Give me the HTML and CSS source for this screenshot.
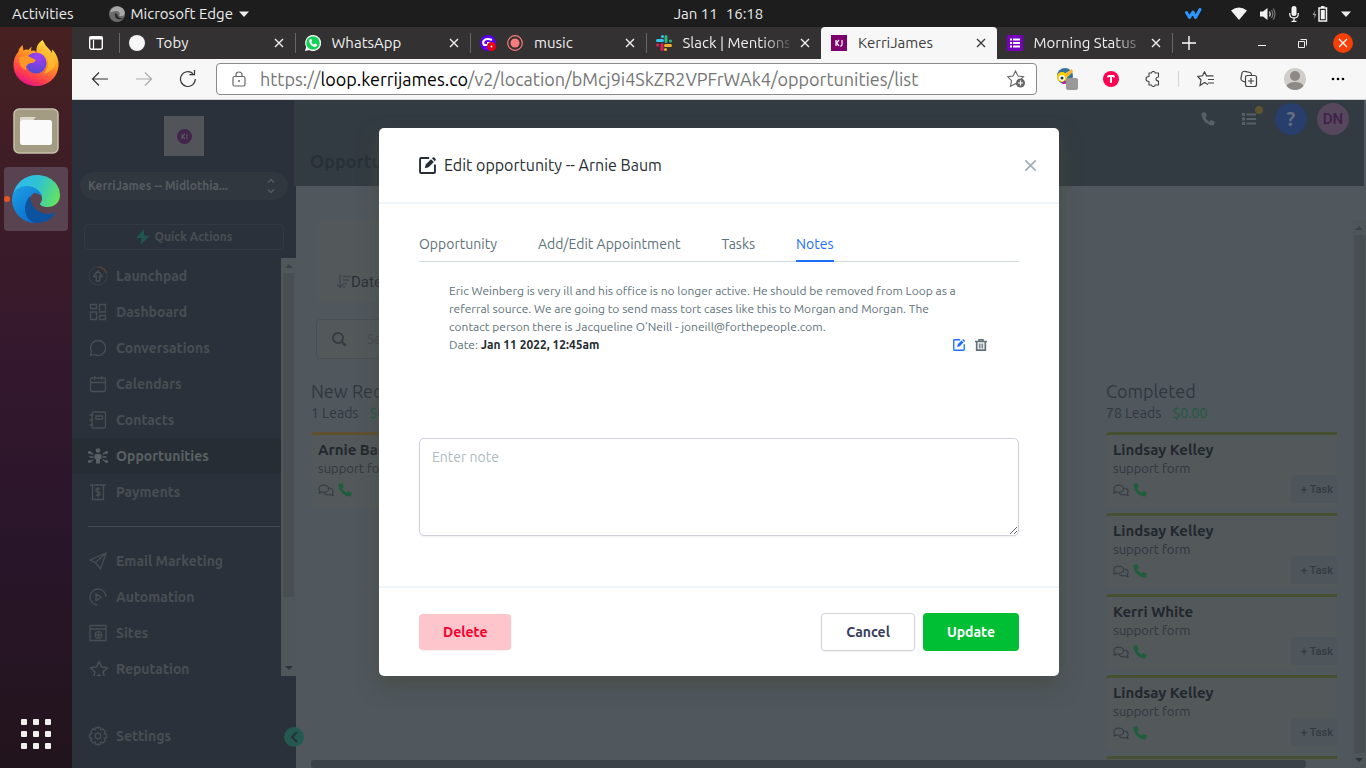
FILE: index.html
```html
<!DOCTYPE html>
<html lang="en">
<head>
<meta charset="utf-8">
<title>KerriJames</title>
<link rel="stylesheet" href="styles.css">
</head>
<body>
<svg class="sprite" aria-hidden="true">
  <symbol id="x" viewBox="0 0 10 10"><path d="M1 1l8 8M9 1l-8 8" fill="none" stroke="currentColor" stroke-width="1.4"/></symbol>
  <symbol id="phone" viewBox="0 0 16 16"><path d="M1.300.8 4.300.2Q5 .1 5.300.8L6.500 3.900Q6.700 4.500 6.200 5L4.800 6.200Q6.300 9.100 9.700 11L11 9.500Q11.500 9 12.100 9.300L15.200 10.700Q15.800 11 15.600 11.700L14.900 14.700Q14.700 15.400 14 15.400C6.500 15.400.6 9.200.6 1.800Q.6 1 1.300.8z" fill="currentColor"/></symbol>
  <symbol id="chats" viewBox="0 0 18 14"><g fill="none" stroke="currentColor" stroke-width="1.300" stroke-linejoin="round"><path d="M6.500 1C9.600 1 12 2.800 12 5s-2.400 4-5.500 4c-.9 0-1.700-.1-2.400-.4C3.200 9.300 2 9.800.8 9.800 1.500 9 2 8.100 2 7.500 1.300 6.800 1 6 1 5c0-2.200 2.400-4 5.500-4z"/><path d="M12.800 4.300c2.400.4 4.200 1.900 4.200 3.700 0 .9-.4 1.700-1 2.400.1.700.6 1.500 1.200 2.300-1.300-.1-2.500-.5-3.400-1.200-3 .8-5.800 0-7.100-1.800"/></g></symbol>
  <symbol id="edit" viewBox="0 0 16 16"><path d="M9.500 1H2Q1 1 1 2v12q0 1 1 1h12q1 0 1-1V7" fill="none" stroke="currentColor" stroke-width="1.800"/><path d="M5.500 10.500 6.300 7l5-5 2.700 2.700-5 5zM12.200 1.200l1-1q2.700.3 2.600 2.700l-1 1z" fill="currentColor"/></symbol>
  <symbol id="star" viewBox="0 0 18 18"><path d="M9 1.300 11.300 6.300 16.800 7 12.700 10.700 13.900 16.300 9 13.500 4.100 16.300 5.300 10.700 1.200 7 6.700 6.300z" fill="none" stroke="currentColor" stroke-width="1.400" stroke-linejoin="round"/></symbol>
  <symbol id="magnify" viewBox="0 0 16 16"><circle cx="7" cy="7" r="5" fill="none" stroke="currentColor" stroke-width="1.900"/><path d="m10.600 10.600 4.200 4.200" stroke="currentColor" stroke-width="2.200"/></symbol>
</svg>

<header class="topbar">
  <div class="topbar-left">
    <button>Activities</button>
    <button class="app-menu">
      <svg width="16" height="16" viewBox="0 0 16 16"><circle cx="8" cy="8" r="8" fill="#6c6c6c"/><path d="M1 7C2 2 6 0 10 .7c5 1 7 6 5 8.300-1 1.500-4 1.500-5 .5 2-2 0-4.500-2.500-4.500C4 5 1.500 6 1 7z" fill="#a8a8a8"/><path d="M6 7c-1 3 1 6.500 4.500 6.500 2 0 3.500-.8 4-1.500-3 1-6-.5-6-3.500z" fill="#2b2b2b"/></svg>
      Microsoft Edge
      <svg width="10" height="6" viewBox="0 0 10 6"><path d="M0 .5h10L5 6z" fill="#eee"/></svg>
    </button>
  </div>
  <time class="clock"><span>Jan 11</span><span>16:18</span></time>
  <div class="tray">
    <svg class="tray-w" width="17" height="12" viewBox="0 0 17 12"><path d="M1.500 4.500 4.500 9.500 8 4l2.500 5.500L15 1.500" fill="none" stroke="#2e95ff" stroke-width="3" stroke-linecap="round" stroke-linejoin="round"/></svg>
    <svg width="16" height="13" viewBox="0 0 16 13"><path d="M0 3.500Q8-2.500 16 3.500L8 13z" fill="#f2f2f2"/></svg>
    <svg width="16" height="14" viewBox="0 0 16 14"><path d="M0 4.500h3L7.500 1v12L3 9.500H0z" fill="#f2f2f2"/><path d="M9.500 4.500q1.500 2.500 0 5" fill="none" stroke="#ddd" stroke-width="1.300"/><path d="M11.500 3q2.500 4 0 8M13.300 1.500q3.200 5.500 0 11" fill="none" stroke="#777" stroke-width="1.200"/></svg>
    <svg width="10" height="16" viewBox="0 0 10 16"><rect x="2.500" y="0" width="5" height="10" rx="2.500" fill="#f2f2f2"/><path d="M.8 7v1.500Q1 12 5 12t4.200-3.500V7M5 12v3M2.500 15.300h5" fill="none" stroke="#f2f2f2" stroke-width="1.300"/></svg>
    <svg width="16" height="16" viewBox="0 0 16 16"><path d="M3.500 4 .5 9h2L2 13l2.500-5h-2z" fill="#999"/><path d="M7 2h7.500v13H7zM9 .8h3.500" fill="none" stroke="#f2f2f2" stroke-width="1.500"/><path d="M8.800 4h4v9.200h-4z" fill="#f2f2f2"/></svg>
    <svg width="10" height="6" viewBox="0 0 10 6"><path d="M0 .5h10L5 6z" fill="#eee"/></svg>
  </div>
</header>

<div class="desktop">
  <nav class="dock" aria-label="Dock">
    <button class="dock-app" aria-label="Firefox">
      <svg width="48" height="48" viewBox="0 0 48 48"><defs><linearGradient id="ff" x1=".8" y1="0" x2=".3" y2="1"><stop offset="0" stop-color="#fff04a"/><stop offset=".45" stop-color="#ff9021"/><stop offset=".8" stop-color="#ff3b50"/><stop offset="1" stop-color="#e0108a"/></linearGradient><radialGradient id="fp" cx=".6" cy=".2" r=".9"><stop offset="0" stop-color="#a73df0"/><stop offset="1" stop-color="#4b4bd0"/></radialGradient></defs><path d="M30.500 1c2 3 2.500 5 5.500 8 1.500 1.500 3 3 3.800 5l.4-3.500c4 4 7 10 6.300 16.500C45.500 39 36 47 24 47S1.500 38 1.500 26c0-6 2-10 5-13.500L7 10l3.500-4 1 5.500c1.500-1 3-1.300 5-.5l3-3.500-.5 4.500c2-1 4-.5 5.500 1C24 8 26 4 30.500 1z" fill="url(#ff)"/><circle cx="24" cy="24" r="10.500" fill="url(#fp)"/><path d="M7 19q6-4 11-1l6 3q-1 3-7 3.500-4 2-3 7Q7 28 7 19z" fill="#ff9628"/><path d="M26 14q8 0 10 8 1 8-5 13 10-2 13-11-3-9-9-12-4-1-9 2z" fill="#ffc12f" opacity=".7"/></svg>
    </button>
    <button class="dock-app" aria-label="Files">
      <svg width="46" height="46" viewBox="0 0 46 46"><rect x="1" y="1" width="44" height="44" rx="5" fill="#a39b82" stroke="#c6c0aa" stroke-width="1.500"/><path d="M7 11q0-2 2-2h9l4 4v5H7z" fill="#ddd9cc"/><rect x="7" y="12" width="32" height="25" rx="2.500" fill="#fafafa"/><path d="M7 13q0-1 2-1h11l3-3H9q-2 0-2 2z" fill="#ddd9cc"/></svg>
    </button>
    <button class="dock-app running" aria-label="Microsoft Edge">
      <svg width="48" height="48" viewBox="0 0 48 48"><defs><linearGradient id="eg" x1="0" y1=".3" x2="1" y2=".6"><stop offset="0" stop-color="#2fb9f0"/><stop offset=".5" stop-color="#2fc4d0"/><stop offset="1" stop-color="#62e35d"/></linearGradient><linearGradient id="eb" x1="0" y1="0" x2=".6" y2="1"><stop offset="0" stop-color="#1da0e2"/><stop offset="1" stop-color="#0a6fd0"/></linearGradient></defs><path d="M1 20C3 8 13 0 25 0c13 0 23 9 23 20 0 8-6 12-12 12-5 0-8-1.500-8-3 0-1 2-2 2-5.500C30 18 25 13 17 12 8 12 3 16 1 20z" fill="url(#eg)"/><path d="M0 24C0 15 8 11 15 11c8 0 14 5 15 11-2-3-5-4-8-4-7 4-11 23 2 30C9 48 0 36 0 24z" fill="url(#eb)"/><path d="M18 21c0 10 8 18 19 18 3 0 5-1 7-2-4 7-11 11-19 11-7 0-12-7-12-14 0-6 3-11 5-13z" fill="#0c529f"/></svg>
    </button>
    <button class="show-apps" aria-label="Show applications"><i></i><i></i><i></i><i></i><i></i><i></i><i></i><i></i><i></i></button>
  </nav>

  <div class="browser">
    <div class="tabstrip">
      <button class="tab-menu" aria-label="Tab actions"><svg width="14" height="14" viewBox="0 0 14 14"><rect x=".7" y=".7" width="12.600" height="12.600" rx="2" fill="none" stroke="#fff" stroke-width="1.400"/><path d="M1 1h12v2H1zM4.500 4v9" fill="#fff" stroke="#fff" stroke-width="1.200"/></svg></button>
      <div class="tabs">
        <div class="tab"><svg width="16" height="16"><circle cx="8" cy="8" r="8" fill="#f7f7f7"/></svg><span>Toby</span><button aria-label="Close tab"><svg width="10" height="10"><use href="#x"/></svg></button></div>
        <div class="tab"><svg width="16" height="16" viewBox="0 0 16 16"><path d="M8 0a8 8 0 1 1-3.800 15L0 16l1.200-4A8 8 0 0 1 8 0z" fill="#fff"/><circle cx="8" cy="8" r="6.800" fill="#12d156"/><path d="M5 4h1.300l.8 2-.8 1q1 2 2.800 2.600l1-1 2 1v1.200q-1 1.600-3 1Q5 10.500 4.200 6.500 4 5 5 4z" fill="#fff"/></svg><span>WhatsApp</span><button aria-label="Close tab"><svg width="10" height="10"><use href="#x"/></svg></button></div>
        <div class="tab"><svg width="16" height="16" viewBox="0 0 16 16"><circle cx="8" cy="8" r="8" fill="#5a00f0"/><path d="M12 5q-5-2-7.500 0T4 10h4M7 8h5" fill="none" stroke="#fff" stroke-width="2"/><circle cx="11.500" cy="11.500" r="4.500" fill="#e90016"/><circle cx="11.500" cy="11.500" r="1" fill="#fff"/></svg><svg width="16" height="16"><circle cx="8" cy="8" r="7.300" fill="none" stroke="#f97c7c" stroke-width="1.200"/><circle cx="8" cy="8" r="4.500" fill="#f97c7c"/></svg><span>music</span><button aria-label="Close tab"><svg width="10" height="10"><use href="#x"/></svg></button></div>
        <div class="tab fade"><svg width="16" height="16" viewBox="0 0 16 16" fill="none" stroke-width="3" stroke-linecap="round"><path d="M6.500 1.500v.1M6.500 5.500H1.500" stroke="#36c5f0"/><path d="M10 1.500v5M14.500 6h-.1" stroke="#2eb67d"/><path d="M6 14.500v-5M1.500 10h.1" stroke="#e01e5a"/><path d="M9.500 14.500v-.1M9.500 10.500h5" stroke="#ecb22e"/></svg><span>Slack | Mentions</span><button aria-label="Close tab"><svg width="10" height="10"><use href="#x"/></svg></button></div>
        <div class="tab active"><svg width="16" height="16" viewBox="0 0 16 16"><path d="M0 0h16v16H0z" fill="#7d006d"/><path d="M5 5v6M8 5 5.500 8 8 11M11 5v5q-.3 1.200-1.800 1" fill="none" stroke="#fff" stroke-width="1.200"/></svg><span>KerriJames</span><button aria-label="Close tab"><svg width="10" height="10"><use href="#x"/></svg></button></div>
        <div class="tab fade"><svg width="16" height="16" viewBox="0 0 16 16"><rect width="16" height="16" rx="1" fill="#7600bd"/><path d="M3 4.500h2M3 8h2M3 11.500h2M6 4.500h7M6 8h7M6 11.500h7" stroke="#fff" stroke-width="1.800"/></svg><span>Morning Status</span><button aria-label="Close tab"><svg width="10" height="10"><use href="#x"/></svg></button></div>
      </div>
      <button class="new-tab" aria-label="New tab"><svg width="14" height="14"><path d="M7 0v14M0 7h14" stroke="#fff" stroke-width="1.400"/></svg></button>
      <div class="window-buttons">
        <button aria-label="Minimize"><svg width="8" height="8"><path d="M0 6.500h8" stroke="#fff"/></svg></button>
        <button aria-label="Restore"><svg width="9" height="9"><path d="M.5 2.500h6v6h-6zM2.500 .5h6v6" fill="none" stroke="#eee"/></svg></button>
        <button class="quit" aria-label="Close window"><svg width="10" height="10"><use href="#x"/></svg></button>
      </div>
    </div>

    <div class="toolbar">
      <div class="nav-buttons">
        <button aria-label="Back"><svg width="18" height="16" viewBox="0 0 18 16"><path d="M17 8H1.500M8 1.500 1.500 8 8 14.500" fill="none" stroke="#333" stroke-width="1.200"/></svg></button>
        <button aria-label="Forward"><svg width="18" height="16" viewBox="0 0 18 16"><path d="M1 8h15.500M10 1.500 16.500 8 10 14.500" fill="none" stroke="#aaa" stroke-width="1.200"/></svg></button>
        <button aria-label="Reload"><svg width="18" height="18" viewBox="0 0 18 18"><path d="M16.300 9A7.400 7.400 0 1 1 14 3.700M15.500 0v4.700h-5" fill="none" stroke="#333" stroke-width="1.200"/></svg></button>
      </div>
      <div class="address">
        <svg width="14" height="16" viewBox="0 0 14 16"><path d="M2.500 5.500h9q1.500 0 1.500 1.500v6.500q0 1.500-1.500 1.500h-9Q1 15 1 13.500V7q0-1.500 1.500-1.500zM4 5.500V4q0-3 3-3t3 3v1.500" fill="none" stroke="#666" stroke-width="1.200"/><circle cx="7" cy="10" r="1" fill="#666"/></svg>
        <div class="url" role="textbox" aria-label="Address" contenteditable="true" spellcheck="false">https://<b>loop.kerrijames.co</b>/v2/location/bMcj9i4SkZR2VPFrWAk4/opportunities/list</div>
        <svg width="20" height="18" viewBox="0 0 20 18"><path d="M8.500 1 11 6l5.500.7-4 4-.5 5-3.500-2-5 2.600 1-5.600L.8 6.800 6 6z" fill="none" stroke="#666" stroke-width="1.100"/><circle cx="13.500" cy="13" r="4.500" fill="#666"/><path d="M11 13h5M13.500 10.500v5" stroke="#fff" stroke-width="1.200"/></svg>
      </div>
      <div class="extensions">
        <button aria-label="Extension"><svg width="22" height="22" viewBox="0 0 22 22"><circle cx="9" cy="8" r="8" fill="#35759b"/><path d="M3 9 16 1l1 3L6 14z" fill="#f6b638"/><circle cx="6" cy="9" r="5" fill="#ffd000"/><circle cx="6" cy="10" r="3" fill="#fff"/><circle cx="6" cy="10" r="1.500" fill="#234"/><path d="M6 16 9 12v4z" fill="#f0a"/><rect x="10" y="10" width="12" height="12" rx="2" fill="#999"/></svg></button>
        <button aria-label="Toby"><svg width="16" height="16" viewBox="0 0 16 16"><circle cx="8" cy="8" r="8" fill="#ff0053"/><path d="M4 6q0-2 2-2h4q2 0 2 2-1 1-2 0L9 6v5.500q-1 1-2 0V6L6 6Q5 7 4 6z" fill="#fff"/></svg></button>
        <button aria-label="Extensions"><svg width="16" height="16" viewBox="0 0 16 16"><path d="M4 2h2.500q0-1.500 1.800-1.500T10 2h3.500v4q-2.500 0-2.500 2t2.500 2v4H10q0 1.500-1.700 1.500T6.500 14H4v-3.500Q1 10.500 1 8t3-2.500z" fill="none" stroke="#444" stroke-width="1.100" stroke-linejoin="round"/></svg></button>
        <hr>
        <button aria-label="Favorites"><svg width="18" height="16" viewBox="0 0 18 16"><path d="M11 13.500 7.500 11.500 3 14.500l1-5.500L.8 5.500l4.700-.7L7.500.8l2 4h7M11 8.500h6M11 12h6" fill="none" stroke="#444" stroke-width="1.200"/></svg></button>
        <button aria-label="Collections"><svg width="18" height="18" viewBox="0 0 18 18"><path d="M7 5.500h7.500q2 0 2 2v7q0 2-2 2h-7q-2 0-2-2V7.500q0-2 2-2zM11 8v6M8 11h6M5 12 2.500 11q-2-1-1.500-3L2 3q.7-2 3-1.700L10 2.500q1.500.5 1.500 2.500" fill="none" stroke="#444" stroke-width="1.200"/></svg></button>
        <button aria-label="Profile"><svg width="22" height="22" viewBox="0 0 22 22"><circle cx="11" cy="11" r="11" fill="#d0cecb"/><circle cx="11" cy="8" r="5" fill="#8f8985"/><path d="M2.500 18q2-4 8.500-4t8.500 4Q16 22 11 22t-8.500-4z" fill="#8f8985"/></svg></button>
        <button aria-label="Settings and more"><svg width="14" height="4"><circle cx="2" cy="2" r="1.300"/><circle cx="7" cy="2" r="1.300"/><circle cx="12" cy="2" r="1.300"/></svg></button>
      </div>
    </div>

    <div class="page">
      <aside class="sidebar">
        <div class="logo"><svg width="15" height="15" viewBox="0 0 15 15"><circle cx="7.500" cy="7.500" r="7.500" fill="#41264a"/><path d="M5 5v5M8 5 5.500 7.500 8 10M10 5v5" fill="none" stroke="#5b5462" stroke-width="1.100"/></svg></div>
        <button class="location"><span>KerriJames -- Midlothia...</span><svg width="8" height="16" viewBox="0 0 8 16"><path d="M1 4.500 4 1.500l3 3M1 11.500l3 3 3-3" fill="none" stroke="currentColor" stroke-width="1.500"/></svg></button>
        <button class="quick"><svg width="14" height="16" viewBox="0 0 14 16"><path d="M8 0 0 9h5.500L4.500 16 14 6.500H8z" fill="#1f5450"/></svg>Quick Actions</button>
        <div class="menu-wrap">
          <nav class="menu">
            <a href="#"><svg width="20" height="20" viewBox="0 0 20 20"><circle cx="10" cy="10" r="9" fill="none" stroke="#363c43" stroke-width="1.200"/><path d="M10 1q6 0 8.500 6" fill="none" stroke="#554332" stroke-width="1.500"/><path d="M10 5 5.500 10q1 1.500 2.800 0v5h3.400v-5q1.800 1.500 2.800 0z"/></svg>Launchpad</a>
            <a href="#"><svg width="20" height="20" viewBox="0 0 20 20"><path d="M2.500 2.500h6v4h-6zM2.500 10h6v7.500h-6zM11.500 2.500h6V10h-6zM11.500 13.500h6v4h-6z"/></svg>Dashboard</a>
            <a href="#"><svg width="20" height="20" viewBox="0 0 20 20"><path d="M10 2.500a7.500 7.500 0 1 1-3.300 14.200L2.500 17.500l.8-4.300A7.500 7.500 0 0 1 10 2.500z"/></svg>Conversations</a>
            <a href="#"><svg width="20" height="20" viewBox="0 0 20 20"><path d="M4 4h12q1.500 0 1.500 1.500V16q0 1.500-1.500 1.500H4q-1.500 0-1.500-1.500V5.500Q2.500 4 4 4zM2.500 8.500h15M6.500 2v4M13.500 2v4"/></svg>Calendars</a>
            <a href="#"><svg width="20" height="20" viewBox="0 0 20 20"><path d="M5.500 2H16q1.500 0 1.500 1.500v13Q17.500 18 16 18H5.500Q4 18 4 16.500v-13Q4 2 5.500 2zM8 6h6.500v3H8zM1.500 5h4M1.500 10h4M1.500 15h4"/></svg>Contacts</a>
            <a href="#" class="current"><svg width="20" height="20" viewBox="0 0 20 20"><circle cx="10" cy="4.500" r="2.300" fill="currentColor" stroke="none"/><path d="M8 8h4q1.500 0 1.500 1.500V13H12v4.500H8V13H6.500V9.500Q6.500 8 8 8z" fill="currentColor" stroke="none"/><path d="M5.500 11H1.500M5 8.500Q4 6.500 1.500 6.500M5 13.500Q4 15.500 1.500 15.500M14.500 11h4M15 8.500q1-2 3.500-2M15 13.500q1 2 3.500 2" stroke-width="1.400"/><circle cx="1.500" cy="6.500" r=".9"/><circle cx="18.500" cy="6.500" r=".9"/><circle cx="1.500" cy="15.500" r=".9"/><circle cx="18.500" cy="15.500" r=".9"/></svg>Opportunities</a>
            <a href="#"><svg width="20" height="20" viewBox="0 0 20 20"><path d="M2 3h16M4.500 3v14.500h11V3"/><path d="M12 7.500q-1-1-2-1-2 0-2 1.700Q8 10 10 10t2 1.700q0 1.800-2 1.800-1 0-2-1M10 5v10"/></svg>Payments</a>
            <hr>
            <a href="#"><svg width="20" height="20" viewBox="0 0 20 20"><path d="M18 2 2 9l5.500 2.500L12.500 18zM18 2 7.500 11.500"/></svg>Email Marketing</a>
            <a href="#"><svg width="20" height="20" viewBox="0 0 20 20"><path d="M18 10a8 8 0 1 0-8.500 8M8 7v6.500l5-3.200z"/></svg>Automation</a>
            <a href="#"><svg width="20" height="20" viewBox="0 0 20 20"><path d="M2 2.500h16v15H2zM2 6h16"/><circle cx="10.500" cy="12" r="3.300"/><path d="M10.500 9v6M7.500 12h6"/></svg>Sites</a>
            <a href="#"><svg width="20" height="20" viewBox="-1 -1 20 20"><use href="#star"/></svg>Reputation</a>
          </nav>
          <div class="scrollbar menu-scroll"><i class="up"></i><div class="thumb"></div><i class="down"></i></div>
        </div>
        <a href="#" class="settings"><svg width="20" height="20" viewBox="0 0 20 20"><path d="M8 1.500h4l.6 2.300 2-1 2.700 2.800-1.200 2 2.400.7v3.400l-2.400.7 1.200 2-2.700 2.800-2-1.200-.6 2.500H8l-.6-2.500-2 1.200-2.700-2.800 1.200-2-2.400-.7V8.300l2.400-.7-1.200-2 2.700-2.800 2 1z" stroke-linejoin="round"/><circle cx="10" cy="10" r="2.800"/></svg>Settings</a>
        <button class="collapse" aria-label="Collapse sidebar"><svg width="8" height="12" viewBox="0 0 8 12"><path d="M7 1 2 6l5 5" fill="none" stroke="#2a313a" stroke-width="2.200"/></svg></button>
      </aside>

      <main class="main">
        <header class="page-head">
          <div class="head-actions">
            <button class="plain" aria-label="Call"><svg width="14" height="14"><use href="#phone"/></svg></button>
            <button class="plain list" aria-label="Task list"><svg width="14" height="12"><path d="M0 1.500h3M0 6h3M0 10.500h3" stroke="currentColor" stroke-width="3"/><path d="M4.500 1.500H14M4.500 6H14M4.500 10.500H14" stroke="currentColor" stroke-width="2"/></svg></button>
            <button class="round help" aria-label="Help">?</button>
            <button class="round user" aria-label="Account">DN</button>
          </div>
          <h1>Opportunities</h1>
        </header>
        <div class="content">
          <div class="scroll-area">
            <div class="filters"><button><svg width="14" height="14" viewBox="0 0 14 14"><path d="M3 0v12M0 9.500l3 3 3-3M6 1.500h8M6 5h6M6 8.500h4M6 12h2" fill="none" stroke="#3e464c" stroke-width="1.500"/></svg>Date</button></div>
            <label class="search"><svg width="16" height="16"><use href="#magnify"/></svg><input type="search" placeholder="Search" aria-label="Search"></label>
            <div class="board">
              <section class="column new">
                <h2>New Requests</h2><p class="sum"><span>1 Leads</span><span class="money">$0.00</span></p>
                <article class="lead"><h3>Arnie Baum</h3><p>support form</p><div class="lead-actions"><button aria-label="Conversations"><svg width="16" height="13"><use href="#chats"/></svg></button><button class="call" aria-label="Call"><svg width="14" height="14"><use href="#phone"/></svg></button></div></article>
              </section>
              <section class="column done">
                <h2>Completed</h2><p class="sum"><span>78 Leads</span><span class="money">$0.00</span></p>
                <article class="lead"><h3>Lindsay Kelley</h3><p>support form</p><div class="lead-actions"><button aria-label="Conversations"><svg width="16" height="13"><use href="#chats"/></svg></button><button class="call" aria-label="Call"><svg width="14" height="14"><use href="#phone"/></svg></button></div><button class="task">+ Task</button></article>
                <article class="lead"><h3>Lindsay Kelley</h3><p>support form</p><div class="lead-actions"><button aria-label="Conversations"><svg width="16" height="13"><use href="#chats"/></svg></button><button class="call" aria-label="Call"><svg width="14" height="14"><use href="#phone"/></svg></button></div><button class="task">+ Task</button></article>
                <article class="lead"><h3>Kerri White</h3><p>support form</p><div class="lead-actions"><button aria-label="Conversations"><svg width="16" height="13"><use href="#chats"/></svg></button><button class="call" aria-label="Call"><svg width="14" height="14"><use href="#phone"/></svg></button></div><button class="task">+ Task</button></article>
                <article class="lead"><h3>Lindsay Kelley</h3><p>support form</p><div class="lead-actions"><button aria-label="Conversations"><svg width="16" height="13"><use href="#chats"/></svg></button><button class="call" aria-label="Call"><svg width="14" height="14"><use href="#phone"/></svg></button></div><button class="task">+ Task</button></article>
                <article class="lead"></article>
              </section>
            </div>
            <div class="h-scroll"><div></div></div>
          </div>
          <div class="scrollbar page-scroll"><i class="up"></i><div class="thumb"></div><i class="down"></i></div>
        </div>
      </main>

      <div class="overlay">
        <div class="modal" role="dialog" aria-labelledby="modal-title">
          <header class="modal-head">
            <svg width="17" height="17"><use href="#edit"/></svg>
            <h2 id="modal-title">Edit opportunity -- Arnie Baum</h2>
            <button class="dismiss" aria-label="Close"><svg width="13" height="13"><use href="#x"/></svg></button>
          </header>
          <div class="modal-body">
            <nav class="modal-tabs"><a href="#">Opportunity</a><a href="#">Add/Edit Appointment</a><a href="#">Tasks</a><a href="#" class="on">Notes</a></nav>
            <div class="note">
              <p>Eric Weinberg is very ill and his office is no longer active. He should be removed from Loop as a<br>referral source. We are going to send mass tort cases like this to Morgan and Morgan. The<br>contact person there is Jacqueline O’Neill - joneill@forthepeople.com.</p>
              <div class="note-foot"><span>Date: <strong>Jan 11 2022, 12:45am</strong></span>
                <div class="note-actions"><button class="blue" aria-label="Edit note"><svg width="12" height="12"><use href="#edit"/></svg></button><button aria-label="Delete note"><svg width="12" height="12" viewBox="0 0 12 12"><path d="M0 2.500h12M4 2V.8h4V2" fill="none" stroke="currentColor" stroke-width="1.500"/><path d="M1.700 3v8.200h8.600V3" fill="none" stroke="currentColor" stroke-width="1.700"/><path d="M4.300 4.500v5M6 4.500v5M7.700 4.500v5" stroke="currentColor"/></svg></button></div>
              </div>
            </div>
            <textarea placeholder="Enter note" aria-label="Note"></textarea>
          </div>
          <footer class="modal-foot"><button class="btn delete">Delete</button><div><button class="btn cancel">Cancel</button><button class="btn update">Update</button></div></footer>
        </div>
      </div>
    </div>
  </div>
</div>
</body>
</html>
```
FILE: styles.css
```css
* { box-sizing: border-box; }
body { margin: 0; height: 100vh; overflow: hidden; display: flex; flex-direction: column; font: 15px/20px Ubuntu, "Noto Sans", sans-serif; background: #1d1d1d; }
button { font: inherit; color: inherit; background: none; border: 0; padding: 0; display: flex; align-items: center; justify-content: center; cursor: pointer; }
a { color: inherit; text-decoration: none; }
h1, h2, h3, p { margin: 0; font-weight: 400; }
svg { flex: none; display: block; }
.sprite { position: absolute; width: 0; height: 0; }

.topbar { flex: none; height: 27px; display: grid; grid-template-columns: 1fr auto 1fr; align-items: center; padding: 0 15px 0 12px; color: #eee; background: #1d1d1d; }
.topbar-left { display: flex; gap: 35px; }
.app-menu { gap: 6px; }
.clock { display: flex; gap: 8px; padding-left: 74px; }
.tray { display: flex; align-items: center; justify-content: flex-end; gap: 13px; }
.tray-w { margin-right: 16px; }

.desktop { flex: 1; min-height: 0; display: flex; }
.dock { width: 72px; flex: none; display: flex; flex-direction: column; align-items: center; gap: 4px; padding: 4px 0 19px; background: linear-gradient(#472121, #34182d 44%, #29152a 70%, #22141c); }
.dock-app { width: 64px; height: 64px; border-radius: 4px; position: relative; }
.running { background: #5a4351; }
.running::before { content: ""; position: absolute; left: 0; top: 29px; width: 6px; height: 6px; border-radius: 50%; background: #e95420; }
.show-apps { margin-top: auto; display: grid; grid-template-columns: repeat(3, 6px); gap: 6px; }
.show-apps i { width: 6px; height: 6px; border-radius: 1px; background: #f2f0ee; }

.browser { flex: 1; min-width: 0; display: flex; flex-direction: column; }
.tabstrip { flex: none; height: 32px; display: flex; background: #333132; color: #f0f0f0; }
.tab-menu { width: 47px; flex: none; }
.tabs { display: flex; width: 1053px; min-width: 0; }
.tab { flex: 1; min-width: 0; display: flex; align-items: center; gap: 11px; padding: 0 11px 0 10px; position: relative; }
.tab::before { content: ""; position: absolute; left: 0; top: 6px; height: 20px; width: 1px; background: #686667; }
.tab.active::before, .active + .tab::before { display: none; }
.tab span { flex: 1; min-width: 0; white-space: nowrap; overflow: hidden; }
.tab.fade span { mask-image: linear-gradient(90deg, #000 75%, #0003); }
.tab.active { background: #f7f7f7; color: #3c3c3c; border-radius: 4px 4px 0 0; }
.new-tab { width: 32px; border-left: 1px solid #686667; height: 20px; margin-top: 6px; }
.window-buttons { margin-left: auto; display: flex; align-items: center; gap: 32px; padding-right: 13px; }
.quit { width: 20px; height: 20px; border-radius: 50%; background: #f43f06; margin-left: -6px; }

.toolbar { flex: none; height: 41px; display: flex; align-items: center; background: #f7f7f7; border-bottom: 1px solid #cfcfcf; padding-right: 21px; }
.nav-buttons { display: flex; gap: 26px; padding: 0 19px; }
.address { flex: 1; min-width: 0; height: 32px; display: flex; align-items: center; gap: 14px; padding: 0 9px 0 15px; background: #fff; border: 1px solid #8b8b8b; border-radius: 4px; }
.url { flex: 1; min-width: 0; overflow: hidden; white-space: nowrap; color: #757575; font-size: 18px; line-height: 24px; outline: 0; }
.url b { font-weight: 400; color: #000; }
.extensions { flex: none; width: 308px; display: flex; align-items: center; justify-content: space-between; padding-left: 19px; }
.extensions hr { width: 1px; height: 16px; margin: 0 -8px; border: 0; background: #d5d5d5; }

.page { flex: 1; min-height: 0; display: flex; position: relative; background: #50575d; }
.sidebar { width: 224px; flex: none; position: relative; display: flex; flex-direction: column; background: #2b313b; color: #484e53; }
.logo { width: 40px; height: 40px; margin: 16px auto; background: #515559; display: flex; align-items: center; justify-content: center; }
.location { height: 28px; margin: 0 8px; padding: 0 13px 0 8px; justify-content: space-between; border-radius: 14px; background: #30373e; color: #555c60; font-size: 12px; font-weight: 600; }
.quick { height: 26px; margin: 24px 12px 8px; gap: 5px; border: 1px solid #333941; border-radius: 4px; font-size: 12px; font-weight: 600; }
.menu-wrap { height: 418px; flex: none; display: flex; }
.menu { flex: 1; min-width: 0; overflow: hidden; }
.menu a, .settings { height: 36px; display: flex; align-items: center; gap: 8px; padding-left: 16px; font-size: 14px; font-weight: 600; }
.menu svg, .settings svg { fill: none; stroke: currentColor; stroke-width: 1.3; }
.menu hr { height: 1px; border: 0; margin: 16px 1px 16px 16px; background: #434950; }
.menu .current { background: #272d34; color: #5a6064; border-radius: 4px; }
.settings { margin-top: 42px; }
.collapse { position: absolute; right: -8px; bottom: 21px; width: 20px; height: 20px; border-radius: 50%; background: #23594f; z-index: 1; }

.scrollbar { width: 15px; flex: none; display: flex; flex-direction: column; align-items: center; background: #50575b; }
.scrollbar .thumb { width: 11px; flex: 1; background: #484e51; }
.scrollbar i { border: 4px solid transparent; }
.scrollbar .up { border-top: 0; border-bottom-color: #3c4246; margin: 6px 0 5px; }
.scrollbar .down { border-bottom: 0; border-top-color: #2c3338; margin: 5px 0 6px; }
.menu-scroll .thumb { margin-bottom: 64px; }
.page-scroll { width: 14px; margin-top: 34px; background: #4f565a; }

.main { flex: 1; min-width: 0; display: flex; flex-direction: column; }
.page-head { flex: none; height: 86px; margin: 0 2px 0 -2px; padding: 3px 15px 0 16px; background: #323b41; position: relative; }
.head-actions { display: flex; justify-content: flex-end; align-items: center; height: 32px; color: #576065; }
.plain { width: 14px; margin-right: 27px; position: relative; }
.plain.list { margin-right: 19px; }
.plain.list::after { content: ""; position: absolute; right: -7px; top: -7px; width: 8px; height: 8px; border-radius: 50%; background: #5f5430; }
.round { width: 32px; height: 32px; border-radius: 50%; }
.help { background: #283f6e; color: #636f80; font-size: 20px; font-weight: 700; margin-right: 10px; }
.user { background: #56475c; color: #40204b; font: 500 15px Roboto, sans-serif; }
h1 { font-size: 18px; line-height: 24px; margin-top: 14px; font-weight: 600; color: #273036; }
.content { flex: 1; min-height: 0; display: flex; }
.scroll-area { flex: 1; min-width: 0; padding: 34px 15px 0; display: flex; flex-direction: column; }
.filters { flex: none; max-width: 700px; height: 82px; margin: 0 5px; padding: 52px 0 0 21px; border-radius: 4px; background: #53585b; color: #293037; }
.filters button { font: 15px/20px Roboto, sans-serif; }
.search { flex: none; max-width: 700px; height: 40px; margin: 17px 5px 20px; padding: 0 14px; display: flex; align-items: center; gap: 18px; border: 1px solid #495055; border-radius: 4px; color: #343d43; background: #53585b; }
.search input { border: 0; background: none; font: inherit; font-size: 14px; flex: 1; outline: 0; }
.search input::placeholder { color: #444c51; }
.board { flex: 1; min-height: 0; overflow: hidden; display: flex; justify-content: space-between; }
.column { width: 231px; color: #30373d; }
.column h2 { font-size: 18px; line-height: 24px; }
.sum { display: flex; gap: 11px; font-size: 14px; line-height: 20px; margin-bottom: 9px; }
.money { color: #215a3f; }
.lead { height: 76px; margin-bottom: 5px; padding: 6px 7px 0; border-top: 3px solid #464f30; border-radius: 4px 0 0 4px; background: #53585b; position: relative; }
.new .lead { border-top-color: #5f5030; border-radius: 4px; }
.lead h3 { font-size: 15px; line-height: 18px; font-weight: 600; color: #22272d; }
.lead p { font-size: 13px; line-height: 19px; }
.lead-actions { display: flex; gap: 4px; margin-top: 4px; height: 16px; color: #363e44; }
.call { color: #205d3d; }
.task { position: absolute; right: 0; bottom: 5px; width: 46px; height: 28px; border-radius: 4px 0 0 4px; background: #4e555b; color: #343b41; font: 500 11px Roboto, sans-serif; padding-left: 6px; }
.h-scroll { height: 8px; flex: none; }
.h-scroll div { width: 97%; height: 8px; border-radius: 3px; background: #3b4349; }

.overlay { position: absolute; inset: 0; z-index: 2; display: flex; justify-content: center; align-items: flex-start; padding: 28px 16px; }
.modal { width: 680px; max-width: 100%; background: #fff; border-radius: 5px; color: #607179; box-shadow: 0 10px 20px rgba(70, 74, 65, .7); }
.modal-head { display: flex; align-items: center; gap: 8px; padding: 25px 22px 25px 40px; border-bottom: 2px solid #f0f5f9; color: #272d33; }
.modal-head h2 { font-size: 16px; line-height: 24px; flex: 1; }
.dismiss { color: #a3b0b7; }
.modal-body { padding: 24px 40px 50px; }
.modal-tabs { display: flex; gap: 41px; border-bottom: 1px solid #d3dce0; line-height: 32px; font-size: 14px; }
.modal-tabs a { height: 34px; margin-bottom: -1px; }
.modal-tabs .on { color: #1c70f7; border-bottom: 2px solid #1c70f7; }
.note { padding: 20px 30px 0; height: 176px; font-size: 12px; line-height: 18px; }
.note p { white-space: nowrap; }
.note-foot { display: flex; justify-content: space-between; }
.note strong { color: #252c31; font-weight: 600; }
.note-actions { display: flex; gap: 10px; padding-right: 2px; }
.blue { color: #1c70f7; }
textarea { display: block; width: 100%; height: 98px; padding: 8px 12px; border: 1px solid #cfd2da; border-radius: 5px; box-shadow: 0 1px 2px #0001; font: 14px/20px Ubuntu, "Noto Sans", sans-serif; }
textarea::placeholder { color: #afb9be; }
.modal-foot { display: flex; justify-content: space-between; align-items: center; padding: 25px 40px; border-top: 2px solid #f0f5f9; }
.modal-foot div { display: flex; gap: 8px; }
.btn { height: 38px; padding: 0 24px; border-radius: 4px; font-size: 14px; font-weight: 600; }
.delete { height: 36px; background: #ffc5cc; color: #f4002f; box-shadow: 0 1px 2px #0001; }
.cancel { border: 1px solid #d0d3db; color: #39405a; box-shadow: 0 1px 2px #0001; }
.update { background: #00bf34; color: #fff; }
```
